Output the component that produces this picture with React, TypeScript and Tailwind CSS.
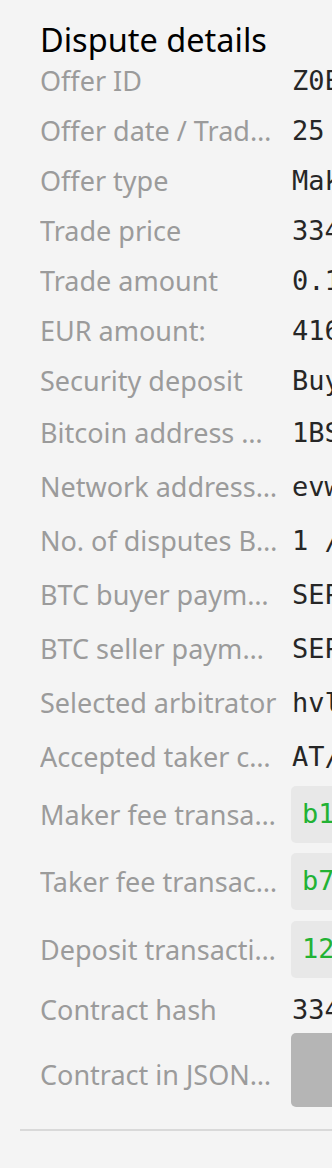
const rows = [
  { label: "Offer ID", value: "Z0EPJHU-8f3a1c2d-e5b6-4c71-0.6.7", row: "h-[50px]" },
  { label: "Offer date / Trade date", value: "25 Mar 2018 14:32:10 / 25 Mar 2018 15:01:44", row: "h-[50px]" },
  { label: "Offer type", value: "Maker as BTC buyer / Taker as BTC seller", row: "h-[50px]" },
  { label: "Trade price", value: "3342.87 EUR", row: "h-[50px]" },
  { label: "Trade amount", value: "0.1245 BTC", row: "h-[50px]" },
  { label: "EUR amount:", value: "416.19 EUR", row: "h-[50px]" },
  { label: "Security deposit", value: "Buyer: 0.0300 BTC / Seller: 0.0300 BTC", row: "h-[50px]" },
  { label: "Bitcoin address BTC buyer / BTC seller", value: "1BSq4Tc7yW2kXbN9mPz3vQeR8hJdLfG6uA", row: "h-[54px]" },
  { label: "Network address BTC buyer / BTC seller", value: "evwq5m2c7kxr3ytb.onion:9999", row: "h-[54px]" },
  { label: "No. of disputes BTC buyer / BTC seller", value: "1 / 0", row: "h-[54px]" },
  { label: "BTC buyer payment details", value: "SEPA - Account owner: M. Keller", row: "h-[54px]" },
  { label: "BTC seller payment details", value: "SEPA - Account owner: J. Novak", row: "h-[54px]" },
  { label: "Selected arbitrator", value: "hvlyhm4kxbdjcoac.onion:9999", row: "h-[54px]" },
  { label: "Accepted taker countries", value: "AT/BE/DE/ES/FI/FR/IE/IT/NL", row: "h-[54px]" },
];

const txs = [
  { label: "Maker fee transaction ID", value: "b1c9e4f07a2d5b8c3e6f1a4d7b0c9e2f5a8d1b4c", wrap: "mt-[2px]" },
  { label: "Taker fee transaction ID", value: "b7a3d1e8c5f2b9a6d3e0c7f4b1a8d5e2c9f6b3a0", wrap: "mt-[10px]" },
  { label: "Deposit transaction ID", value: "12e8f5c2b9a6d3f0e7c4b1a8d5f2e9c6b3a0d7f4", wrap: "mt-[11px]" },
];

const labelCls =
  "w-[238px] shrink-0 truncate font-['Noto_Sans',sans-serif] text-[27px] leading-[36px] text-[#9b9b9b]";
const valueCls =
  "ml-[14px] min-w-0 flex-1 overflow-hidden whitespace-nowrap font-['DejaVu_Sans_Mono',monospace] text-[27px] leading-[36px] text-[#262626]";

export default function App() {
  return (
    <main className="min-h-screen w-[332px] overflow-hidden bg-[#f4f4f4] pl-[20px]">
      <div className="pl-[20px]">
        <h1 className="h-[56px] pt-[24px] font-['Noto_Sans',sans-serif] text-[32.5px] leading-[32px] text-black">
          Dispute details
        </h1>

        {rows.map((r) => (
          <div key={r.label} className={`flex items-center ${r.row}`}>
            <span className={labelCls}>{r.label}</span>
            <span className={valueCls}>{r.value}</span>
          </div>
        ))}

        {/* Transaction IDs */}
        {txs.map((t) => (
          <div key={t.label} className={`flex items-center ${t.wrap}`}>
            <span className={labelCls}>{t.label}</span>
            <div className="ml-[13px] min-w-0 flex-1 overflow-hidden">
              <div className="flex h-[57px] items-center whitespace-nowrap rounded-l-[5px] bg-[#e8e8e8] px-[11px] font-['DejaVu_Sans_Mono',monospace] text-[27px] text-[#22b234]">
                {t.value}
              </div>
            </div>
          </div>
        ))}

        <div className="mt-[9px] flex h-[46px] items-center">
          <span className={labelCls}>Contract hash</span>
          <span className={valueCls}>334f7a2e9c1b8d5f0a3e6c9b2d5f8a1e4c7b0d3f</span>
        </div>

        <div className="flex h-[74px] items-center">
          <span className={`${labelCls} mt-[10px]`}>Contract in JSON format</span>
          <div className="ml-[13px] min-w-0 flex-1 overflow-hidden">
            <button className="block h-[74px] w-[160px] rounded-[5px] bg-[#b5b5b5]" />
          </div>
        </div>
      </div>

      <div className="mt-[22px] h-[2px] w-[400px] bg-[#d9d9d9]" />
    </main>
  );
}
